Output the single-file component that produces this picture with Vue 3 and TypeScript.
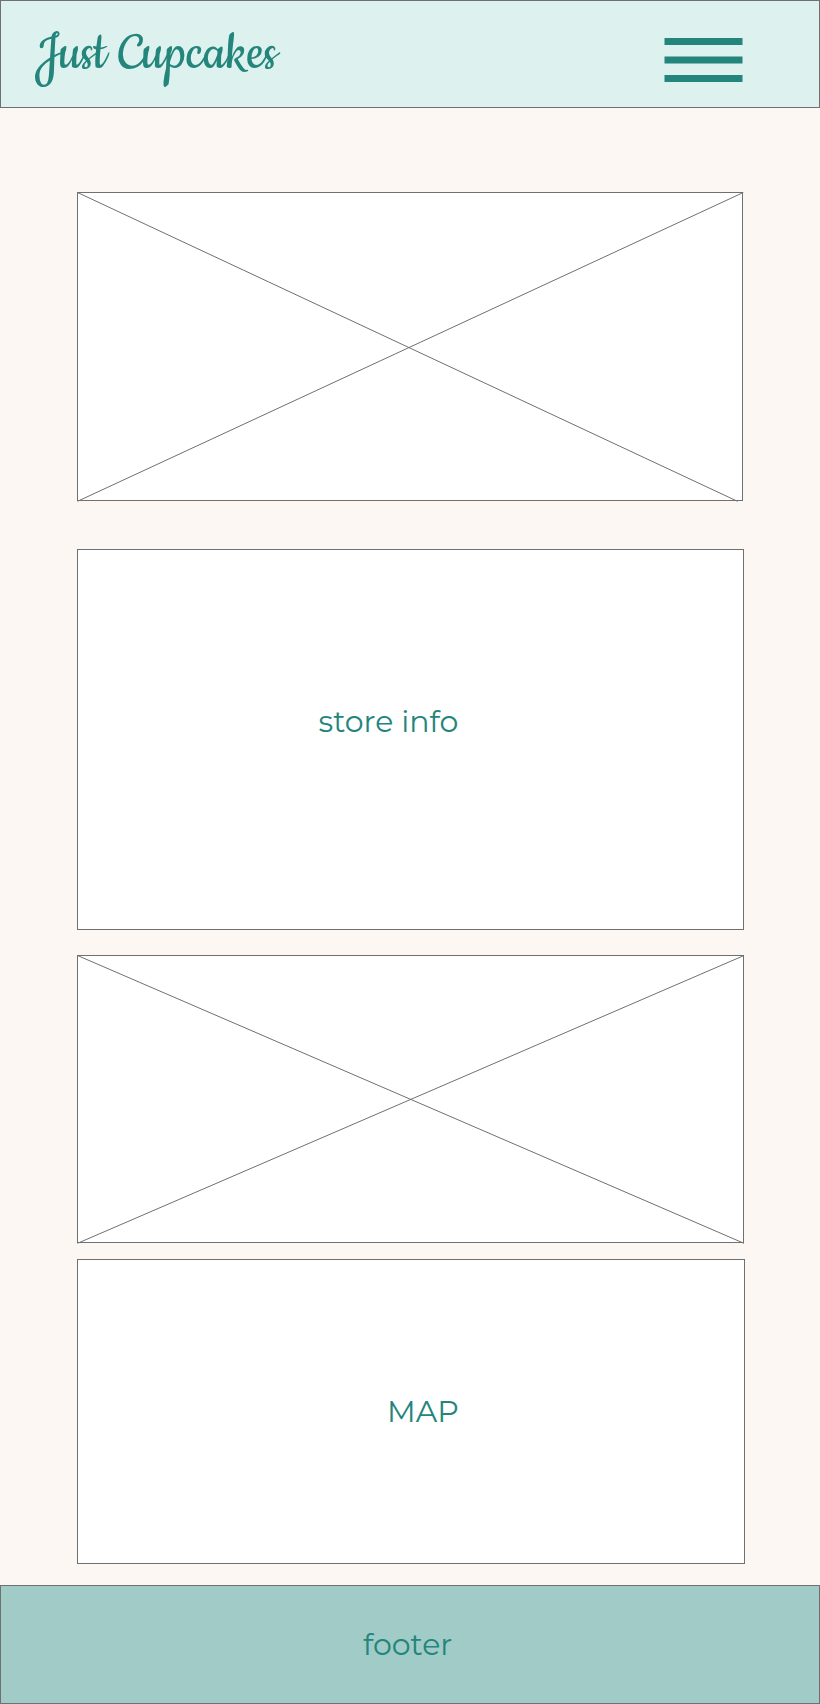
<script setup lang="ts">
interface Panel {
  id: string
  width: number
  height: number
  lines?: [number, number, number, number][]
  label?: { text: string; x: number; y: number }
}

const panels: Panel[] = [
  { id: 'hero', width: 666, height: 309, lines: [[0.5, 0.5, 660.5, 309.3], [0.5, 309.3, 666.3, 0.5]] },
  { id: 'info', width: 667, height: 381, label: { text: 'store info', x: 241.5, y: 183 } },
  { id: 'photo', width: 667, height: 288, lines: [[0.5, 0.5, 667, 288.3], [0.5, 288.3, 667, 0.5]] },
  { id: 'map', width: 668, height: 305, label: { text: 'MAP', x: 310, y: 163 } },
]
</script>

<template>
  <div class="page">
    <header class="header">
      <svg class="logo" width="260" height="70">
        <text x="5" y="42">Just Cupcakes</text>
      </svg>
      <svg class="menu" width="79" height="44" role="img" aria-label="Menu">
        <path d="M.5 3.5h78M.5 22h78M.5 40.5h78" />
      </svg>
    </header>
    <main class="content">
      <section
        v-for="p in panels"
        :key="p.id"
        class="panel"
        :class="p.id"
      >
        <svg class="drawing" :width="p.width" :height="p.height">
          <rect x="0.5" y="0.5" :width="p.width - 1" :height="p.height - 1" />
          <line v-for="(l, i) in p.lines" :key="i" :x1="l[0]" :y1="l[1]" :x2="l[2]" :y2="l[3]" />
          <text v-if="p.label" class="label" :x="p.label.x" :y="p.label.y">{{ p.label.text }}</text>
        </svg>
      </section>
    </main>
    <footer class="footer">
      <svg width="120" height="50">
        <text class="label" x="13" y="36">footer</text>
      </svg>
    </footer>
  </div>
</template>

<style>
body {
  margin: 0;
}
</style>

<style scoped>
.page {
  width: 820px;
  height: 1704px;
  display: flex;
  flex-direction: column;
  background: #fcf7f3;
}
.page svg {
  display: block;
  overflow: visible;
}
.header {
  box-sizing: border-box;
  height: 108px;
  display: flex;
  justify-content: space-between;
  align-items: flex-start;
  padding: 25px 76px 0 29px;
  border: 1px solid #707070;
  background: #ddf1ee;
}
.logo text {
  font: 60px Cookie, "Liberation Serif", serif;
  fill: #23857b;
}
.menu {
  margin-top: 12px;
}
.menu path {
  fill: none;
  stroke: #23857b;
  stroke-width: 7px;
}
.content {
  height: 1477px;
  box-sizing: border-box;
  padding: 84px 0 0 77px;
}
.info {
  margin-top: 48px;
}
.photo {
  margin-top: 25px;
}
.map {
  margin-top: 16px;
}
.drawing rect {
  fill: #fff;
  stroke: #707070;
}
.drawing line {
  stroke: #707070;
}
.label {
  font: 400 30px Montserrat, Lato, sans-serif;
  fill: #23857b;
}
.footer {
  box-sizing: border-box;
  height: 119px;
  padding: 33px 0 0 349px;
  border: 1px solid #707070;
  background: #a1cbc7;
}
</style>
